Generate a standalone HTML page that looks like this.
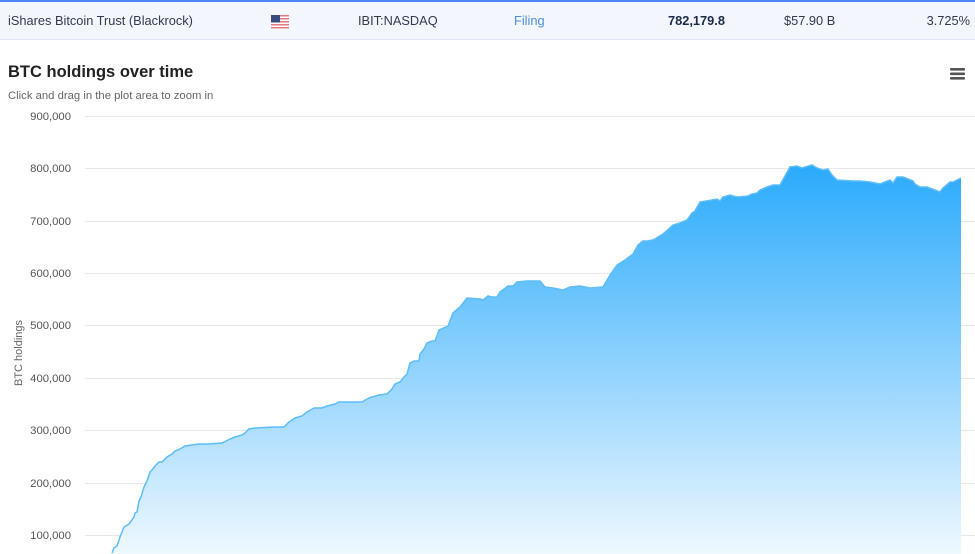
<!DOCTYPE html>
<html><head><meta charset="utf-8"><style>
body{margin:0;width:975px;height:554px;overflow:hidden;background:#fff;font-family:"Liberation Sans",sans-serif;position:relative}
.bar{position:absolute;left:0;top:0;width:975px;height:40px;background:#f4f6fe;border-top:2px solid #4f86f7;border-bottom:1px solid #dfe5f6;box-sizing:border-box}
.bar span{position:absolute;top:11px;font-size:12.8px;color:#333a4d;white-space:nowrap}
</style></head><body>
<div class="bar">
<span style="left:8px">iShares Bitcoin Trust (Blackrock)</span>
<svg style="position:absolute;left:271px;top:13px" width="18" height="14" viewBox="0 0 18 14">
<rect width="18" height="14" fill="#fff"/>
<g fill="#e07a82"><rect y="0" width="18" height="1.5"/><rect y="3" width="18" height="1.5"/><rect y="6" width="18" height="1.5"/><rect y="9" width="18" height="1.5"/><rect y="12" width="18" height="1.5"/></g>
<rect width="9" height="7.5" fill="#3b4a7e"/></svg>
<span style="left:358px">IBIT:NASDAQ</span>
<span style="left:514px;color:#4a8fd8">Filing</span>
<span style="left:668px;font-weight:bold;color:#1d2a4a">782,179.8</span>
<span style="left:784px">$57.90 B</span>
<span style="right:5px">3.725%</span>
</div>
<div style="position:absolute;left:8px;top:63px;font-size:16.5px;font-weight:bold;color:#222">BTC holdings over time</div>
<div style="position:absolute;left:8px;top:90px;font-size:11.3px;color:#666">Click and drag in the plot area to zoom in</div>
<svg style="position:absolute;left:950px;top:67px" width="16" height="14"><g fill="#555"><rect y="1" width="15" height="2.6" rx="1"/><rect y="5.5" width="15" height="2.6" rx="1"/><rect y="10" width="15" height="2.6" rx="1"/></g></svg>
<svg style="position:absolute;left:0;top:0" width="975" height="554">
<defs><linearGradient id="g" x1="0" y1="165" x2="0" y2="554" gradientUnits="userSpaceOnUse"><stop offset="0" stop-color="#2aaafb"/><stop offset="1" stop-color="#eef8ff"/></linearGradient></defs>
<g stroke="#e8e8e8" stroke-width="1">
<line x1="85" x2="975" y1="116.5" y2="116.5"/><line x1="85" x2="975" y1="168.5" y2="168.5"/><line x1="85" x2="975" y1="221.5" y2="221.5"/><line x1="85" x2="975" y1="273.5" y2="273.5"/><line x1="85" x2="975" y1="325.5" y2="325.5"/><line x1="85" x2="975" y1="378.5" y2="378.5"/><line x1="85" x2="975" y1="430.5" y2="430.5"/><line x1="85" x2="975" y1="483.5" y2="483.5"/><line x1="85" x2="975" y1="535.5" y2="535.5"/></g>
<g font-size="11.3" fill="#555" text-anchor="end" font-family="Liberation Sans,sans-serif">
<text x="71" y="120">900,000</text><text x="71" y="172">800,000</text><text x="71" y="225">700,000</text><text x="71" y="277">600,000</text><text x="71" y="329">500,000</text><text x="71" y="382">400,000</text><text x="71" y="434">300,000</text><text x="71" y="487">200,000</text><text x="71" y="539">100,000</text></g>
<text transform="translate(22,353) rotate(-90)" text-anchor="middle" font-size="11" fill="#666" font-family="Liberation Sans,sans-serif">BTC holdings</text>
<path d="M112,553 L114,548 117,546 120,537 124,527 129,524 134,517 135,513 137,512 139,501 141,497 144,487 147,481 150,472 152,470 155,466 159,462 162,462 167,457 172,454 175,451 180,449 185,446 199,444 209,444 222,443 230,439 235,437 242,435 245,433 249,429 255,428 275,427 284,427 289,422 295,418 302,416 307,412 314,408 322,408 327,406 335,404 339,402 345,402 362,402 369,398 379,395 387,394 392,389 395,384 400,382 404,377 407,374 410,363 414,361 419,361 420,354 424,349 427,343 432,341 435,341 439,330 448,326 453,313 460,307 467,298 480,299 483,300 488,296 492,297 497,297 500,292 508,286 513,286 517,282 527,281 540,281 545,287 553,288 563,290 570,287 580,286 590,288 603,287 610,275 617,265 625,260 633,254 638,245 643,241 647,241 653,240 663,234 673,225 680,223 687,220 692,213 695,211 700,202 712,200 717,199 720,201 723,197 730,195 733,196 738,197 748,196 752,194 757,193 760,190 767,187 773,185 780,185 790,167 797,166 802,168 812,165 817,168 823,170 828,169 832,175 837,180 853,181 860,181 870,182 880,184 890,180 893,183 897,177 903,177 908,179 913,181 915,184 920,187 927,187 940,192 943,188 950,182 953,182 961,178 L961,554 L112,554 Z" fill="url(#g)"/>
<path d="M112,553 L114,548 117,546 120,537 124,527 129,524 134,517 135,513 137,512 139,501 141,497 144,487 147,481 150,472 152,470 155,466 159,462 162,462 167,457 172,454 175,451 180,449 185,446 199,444 209,444 222,443 230,439 235,437 242,435 245,433 249,429 255,428 275,427 284,427 289,422 295,418 302,416 307,412 314,408 322,408 327,406 335,404 339,402 345,402 362,402 369,398 379,395 387,394 392,389 395,384 400,382 404,377 407,374 410,363 414,361 419,361 420,354 424,349 427,343 432,341 435,341 439,330 448,326 453,313 460,307 467,298 480,299 483,300 488,296 492,297 497,297 500,292 508,286 513,286 517,282 527,281 540,281 545,287 553,288 563,290 570,287 580,286 590,288 603,287 610,275 617,265 625,260 633,254 638,245 643,241 647,241 653,240 663,234 673,225 680,223 687,220 692,213 695,211 700,202 712,200 717,199 720,201 723,197 730,195 733,196 738,197 748,196 752,194 757,193 760,190 767,187 773,185 780,185 790,167 797,166 802,168 812,165 817,168 823,170 828,169 832,175 837,180 853,181 860,181 870,182 880,184 890,180 893,183 897,177 903,177 908,179 913,181 915,184 920,187 927,187 940,192 943,188 950,182 953,182 961,178" fill="none" stroke="#5dbdf7" stroke-width="1.5"/>
</svg>
</body></html>
